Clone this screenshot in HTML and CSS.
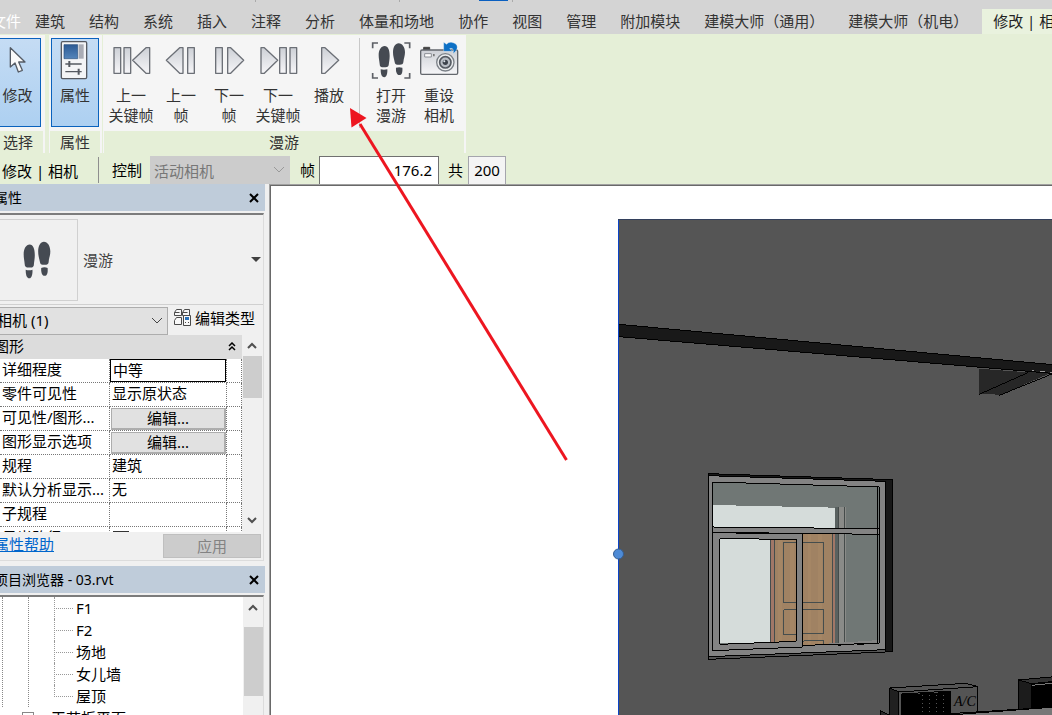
FILE: index.html
```html
<!DOCTYPE html>
<html lang="zh-CN">
<head>
<meta charset="utf-8">
<title>漫游</title>
<link rel="stylesheet" href="styles.css">
</head>
<body>
<svg class="defs" width="0" height="0" aria-hidden="true">
  <defs>
    <linearGradient id="metal" x1="0" y1="0" x2="0" y2="1"><stop offset="0" stop-color="#cdd0d6"/><stop offset="1" stop-color="#f6f6f8"/></linearGradient>
    <linearGradient id="screen" x1="0" y1="0" x2="0" y2="1"><stop offset="0" stop-color="#2c5a94"/><stop offset="1" stop-color="#5485bb"/></linearGradient>
    <g id="feet" fill="#454a52">
      <path d="M404 138c-11 0-18 12-18 27 0 11 2 17 3 27 0 8 4 10 12 10 8 0 13 0 15-6 1-10 3-18 3-29 0-17-5-29-15-29z"/>
      <path d="M392 208c6 2 14 2 20 0 1 11-2 24-9 24-9 0-11-12-11-24z"/>
      <path d="M446 130c-10 0-17 11-17 27 0 12 3 19 5 29 1 7 4 9 11 8 8 0 14 1 15-7 1-12 5-19 5-30 0-15-8-27-19-27z"/>
      <path d="M438 203c6-2 13-2 19 0 1 10 0 22-9 22-8 0-11-11-10-22z"/>
    </g>
  </defs>
</svg>

<nav class="tabs">
  <a class="tab file" href="#">文件</a>
  <a class="tab" href="#">建筑</a>
  <a class="tab" href="#">结构</a>
  <a class="tab" href="#">系统</a>
  <a class="tab" href="#">插入</a>
  <a class="tab" href="#">注释</a>
  <a class="tab" href="#">分析</a>
  <a class="tab" href="#">体量和场地</a>
  <a class="tab" href="#">协作</a>
  <a class="tab" href="#">视图</a>
  <a class="tab" href="#">管理</a>
  <a class="tab" href="#">附加模块</a>
  <a class="tab" href="#">建模大师（通用）</a>
  <a class="tab" href="#">建模大师（机电）</a>
  <a class="tab active" href="#">修改 | 相机</a>
  <svg class="marks" width="520" height="3" aria-hidden="true"><path d="M255.500 0v2M399.500 0v2M512.500 0v2" stroke="#aaa"/><path d="M479 0h29v1h-29z" fill="#0a5fc0"/></svg>
</nav>

<section class="ribbon">
  <div class="panel select-panel">
    <div class="tools">
      <button class="tool selected modify"><svg viewBox="-9 120 126 120"><path d="M31 143v58l14-12 10 27 12-5-11-25h19z" fill="#fafafa" stroke="#555c66" stroke-width="4" stroke-linejoin="round"/></svg><span>修改</span></button>
    </div>
    <div class="caption">选择</div>
  </div>
  <div class="panel props-panel">
    <div class="tools">
      <button class="tool selected"><svg viewBox="160 120 126 120">
        <rect x="182" y="125" width="76" height="111" rx="4" fill="#f3f4f6" stroke="#565a62" stroke-width="4"/>
        <path d="M190 134h41v42h-41z" fill="url(#screen)" stroke="#28507f" stroke-width="2"/><path d="M234 133h15v43h-15z" fill="#a9acb5"/>
        <path d="M194 192h49M194 215h49" stroke="#565a62" stroke-width="4"/><path d="M206 183v18M234 206v18" stroke="#565a62" stroke-width="6"/></svg><span>属性</span></button>
    </div>
    <div class="caption">属性</div>
  </div>
  <div class="panel walk-panel">
    <div class="tools">
      <button class="tool w50"><svg class="metal" viewBox="330 120 126 120"><path d="M342 143h20v77h-20zM372 143h20v77h-20zM398 181l40-38h11v77h-11z"/></svg><span>上一<br>关键帧</span></button>
      <button class="tool w50"><svg class="metal" viewBox="480 120 126 120"><path d="M499 181l40-38h10v77h-10zM563 143h20v77h-20z"/></svg><span>上一<br>帧</span></button>
      <button class="tool w46"><svg class="metal" viewBox="624 120 126 120"><path d="M647 143h20v77h-20zM683 143h9l39 38-39 39h-9z"/></svg><span>下一<br>帧</span></button>
      <button class="tool w52"><svg class="metal" viewBox="24 120 126 120"><path d="M36 143h10l40 38-40 39h-10zM92 143h20v77h-20zM123 143h20v77h-20z"/></svg><span>下一<br>关键帧</span></button>
      <button class="tool w50"><svg class="metal" viewBox="174 120 126 120"><path d="M215 143h10l41 38-41 39h-10z"/></svg><span>播放</span></button>
      <span class="divider"></span>
      <button class="tool w48"><svg viewBox="360 120 126 120"><use href="#feet"/><path d="M368 145v-16h16M463 129h16v16M368 219v15h16M463 234h16v-15" fill="none" stroke="#5d6066" stroke-width="5"/></svg><span>打开<br>漫游</span></button>
      <button class="tool w48"><svg viewBox="504 120 126 120">
        <path d="M521 150v-8h18v8" fill="#444" stroke="#444" stroke-width="3"/>
        <rect x="512" y="150" width="111" height="73" rx="4" fill="url(#metal)" stroke="#63676d" stroke-width="4"/>
        <path d="M524 161h20v10h-20z" fill="#fff" stroke="#8a8e95" stroke-width="3"/><path d="M549 162h5v7h-5z" fill="#777"/>
        <circle cx="586" cy="187" r="26" fill="#eceef0" stroke="#7b8087" stroke-width="4"/><circle cx="586" cy="187" r="17" fill="#b9bec5" stroke="#555a62" stroke-width="5"/><circle cx="586" cy="187" r="8" fill="#3d434c"/><circle cx="583" cy="184" r="3" fill="#dfe5ec"/>
        <path d="M581 127v27h27l-9-8c9-3 14 3 10 15 16-10 20-31-5-34-6-1-11 2-14 6z" fill="#0d70c5" stroke="#fff" stroke-width="1"/></svg><span>重设<br>相机</span></button>
    </div>
    <div class="caption">漫游</div>
  </div>
</section>

<form class="options">
  <span class="context">修改 | 相机</span>
  <label for="control">控制</label>
  <span class="combo disabled"><select id="control" disabled><option>活动相机</option></select><svg width="10" height="6"><path d="M0 0l5 5 5-5" fill="none" stroke="#999"/></svg></span>
  <label for="frame">帧</label>
  <input id="frame" class="frame" value="176.2">
  <label for="total">共</label>
  <input id="total" class="total" value="200" readonly>
</form>

<main class="work">
  <aside class="dock">
    <header class="dock-title"><h2>属性</h2><button class="close" aria-label="关闭"><svg width="10" height="10"><path d="M1 1l8 8M9 1L1 9" stroke="#000" stroke-width="2"/></svg></button></header>
    <section class="properties">
      <button class="type">
        <span class="thumb"><svg width="28" height="38" viewBox="384 128 83 106" preserveAspectRatio="none"><use href="#feet"/></svg></span>
        <span class="type-name">漫游</span>
        <svg width="10" height="5"><path d="M0 0h10l-5 5z" fill="#404040"/></svg>
      </button>
      <div class="filter">
        <span class="combo"><select aria-label="类别"><option>相机 (1)</option></select><svg width="10" height="6"><path d="M0 0l5 5 5-5" fill="none" stroke="#444"/></svg></span>
        <button class="edit-type"><svg width="17" height="17" fill="#f8f8f8" stroke="#4a4a4a"><path d="M.500 3.500l2-3h5v6h-7zM8.500 3.500l2-3h5v6h-7zM.500 11.500l2-3h5v7h-7zM.500 3.500h5M8.500 3.500h5"/><path d="M9.500 6.500h7v10h-7z"/><path d="M11 8h4v3h-4z" fill="#2b71b8" stroke="none"/><path d="M11 13.500h1M14 13.500h1"/></svg>编辑类型</button>
      </div>
      <div class="grid">
        <div class="grid-body">
          <button class="group">图形<svg width="8" height="9"><path d="M1 4l3-3 3 3M1 8l3-3 3 3" fill="none" stroke="#000" stroke-width="1.500"/></svg></button>
          <table>
            <colgroup><col class="c-name"><col class="c-value"><col class="c-link"></colgroup>
            <tbody>
            <tr><th scope="row"><label for="detail">详细程度</label></th><td><input id="detail" value="中等"></td><td></td></tr>
            <tr><th scope="row">零件可见性</th><td>显示原状态</td><td></td></tr>
            <tr><th scope="row">可见性/图形...</th><td><button class="edit">编辑...</button></td><td></td></tr>
            <tr><th scope="row">图形显示选项</th><td><button class="edit">编辑...</button></td><td></td></tr>
            <tr><th scope="row">规程</th><td>建筑</td><td></td></tr>
            <tr><th scope="row">默认分析显示...</th><td>无</td><td></td></tr>
            <tr><th scope="row">子规程</th><td></td><td></td></tr>
            <tr><th scope="row"><label for="sun">日光路径</label></th><td><input id="sun" type="checkbox"></td><td></td></tr>
            </tbody>
          </table>
        </div>
        <div class="scroll"><svg width="10" height="7"><path d="M1 6l4-4 4 4" fill="none" stroke="#505050" stroke-width="2"/></svg><span class="bar short"></span><svg class="down" width="10" height="7"><path d="M1 1l4 4 4-4" fill="none" stroke="#505050" stroke-width="2"/></svg></div>
      </div>
      <footer class="apply"><a href="#">属性帮助</a><button disabled>应用</button></footer>
    </section>
    <header class="dock-title"><h2>项目浏览器 - 03.rvt</h2><button class="close" aria-label="关闭"><svg width="10" height="10"><path d="M1 1l8 8M9 1L1 9" stroke="#000" stroke-width="2"/></svg></button></header>
    <section class="browser">
      <div class="tree">
        <ul>
          <li>F1</li>
          <li>F2</li>
          <li>场地</li>
          <li>女儿墙</li>
          <li>屋顶</li>
        </ul>
        <div class="branch"><span class="expander"></span>天花板平面</div>
      </div>
      <div class="scroll"><svg width="10" height="7"><path d="M1 6l4-4 4 4" fill="none" stroke="#505050" stroke-width="2"/></svg><span class="bar"></span></div>
    </section>
  </aside>

  <section class="canvas">
    <div class="view">
      <svg width="434" height="496" viewBox="618 219 434 496" shape-rendering="crispEdges">
        <!-- beam and bracket -->
        <g transform="translate(600 300) scale(.33333)" stroke="#000" stroke-width="3">
          <path d="M1137 206l145 11h74l-158 69-14-3h-47z" fill="#272727" stroke="none"/>
          <path d="M57 73L1380 196v26L57 110z" fill="#191919"/>
          <path d="M1137 283l147-65M1198 286l158-64"/>
          <path d="M1296 212h6M1320 215h15M1350 218h6" stroke="#999"/>
        </g>
        <!-- window -->
        <g transform="translate(690 460) scale(.33333)" stroke="#000" stroke-width="3">
          <path d="M55 41l553 18v515L55 598z" fill="#181818"/>
          <path d="M55 590l532-22v8L55 598z" fill="#555"/>
          <path d="M55 47l532 17v505L55 590z" fill="#838383"/>
          <path d="M68 66l500 15v469L68 572z" fill="#707775"/>
          <path d="M68 135l368 8v62H68z" fill="#d5dcda" stroke="none"/>
          <path d="M436 142h12v410h-12z" fill="#596160" stroke="none"/>
          <path d="M448 141h19v411h-19z" fill="#8a8b88" stroke="none"/>
          <path d="M447 141v411M464 141v411" stroke="#454b4a"/>
          <path d="M89 238h152v312H89z" fill="#d5dcda" stroke="none"/>
          <path d="M241 222h195v333H241z" fill="#a08263" stroke="none"/>
          <path d="M265 222h10v330h-10zM300 222h12v330h-12zM355 222h8v330h-8zM385 222h12v330h-12z" fill="#a58665" stroke="none"/>
          <path d="M243 222h10v333h-10zM428 222h8v333h-8z" fill="#a17767" stroke="none"/>
          <g fill="none" stroke="#454d4d"><path d="M241 238v312M253 238v312M427 222v333M280 247h121v180H280zM280 451l10-3h111v72l-121 3zM338 545l8-4h55v14"/></g>
          <path d="M338 556l230-16v10l-230 12z" fill="#838383" stroke="none"/>
          <path d="M68 201l500 5v17L68 217z" fill="#838383"/>
          <path d="M68 218l270 4v339L68 572zM89 236l230 2v306L89 553z" fill="#838383" fill-rule="evenodd"/>
          <path d="M338 556l230-6M564 81v469M568 81v469"/>
        </g>
        <!-- air conditioners -->
        <g transform="translate(860 660) scale(.33333)" stroke="#000" stroke-width="3">
          <path d="M89 84l228-14 36 9v90H89z" fill="#545454"/>
          <path d="M89 84l28 12v75H89z" fill="#202020"/>
          <path d="M117 96l236-16M125 102l148-9v72" fill="none"/>
          <path d="M124 105l148-8v70H124z" fill="#000"/>
          <path d="M187 105v60M208 105v60M229 105v60M250 105v60" stroke="#555" stroke-dasharray="3 9"/>
          <path d="M475 60l120-11v130H475z" fill="#343434"/><path d="M475 60l40 11v100h-40z" fill="#1c1c1c"/><path d="M515 71l80-8v120h-80z" fill="#000"/>
          <path d="M515 76l80-8" stroke="#777"/>
          <path d="M61 152l38 20H61z" fill="#282828"/>
          <path d="M270 165L600 140v40H270z" fill="#777"/><path d="M270 161L600 140"/>
        </g>
        <text class="ac-label" x="954" y="706">A/C</text>
        <path d="M618.500 219v496" stroke="#0a43c8"/>
        <path d="M618 219.500h434" stroke="#33405c"/>
        <circle cx="618.500" cy="554" r="5" fill="#4e8bd6" stroke="#355d91" shape-rendering="auto"/>
      </svg>
    </div>
  </section>
</main>

<svg class="pointer" width="220" height="356" viewBox="349 107 220 356" aria-hidden="true"><path d="M360 124l206.500 336" stroke="#ed1620" stroke-width="3"/><path d="M350 108l16.500 10-15 9.500z" fill="#ed1620"/></svg>
</body>
</html>
```

FILE: styles.css
```css
* { box-sizing: border-box; }

body {
  margin: 0;
  height: 100vh;
  overflow: hidden;
  display: flex;
  flex-direction: column;
  position: relative;
  background: #e5efd7;
  color: #000;
  font: 15px/20px "Noto Sans", "Noto Sans CJK SC", sans-serif;
}

button, input, select {
  font: inherit;
  color: inherit;
  margin: 0;
  padding: 0;
  border: 0;
  border-radius: 0;
  background: none;
}

svg { display: block; flex: none; }
.defs { position: absolute; }

/* Tabs */
.tabs {
  position: relative;
  flex: none;
  display: flex;
  align-items: flex-end;
  gap: 24px;
  height: 34px;
  padding-left: 35px;
  background: #d4d4d4;
  white-space: nowrap;
}
.tab {
  flex: none;
  height: 25px;
  line-height: 25px;
  color: #333;
  text-decoration: none;
}
.tab.file { margin-left: -44px; margin-right: -10px; color: #fff; }
.tab.active { margin-left: -10px; padding: 0 11px; background: #e9f2de; color: #222; }
.marks { position: absolute; top: 0; left: 0; }

/* Ribbon */
.ribbon { flex: none; display: flex; padding-top: 1px; height: 122px; color: #333; }
.panel { flex: none; height: 118px; display: flex; flex-direction: column; border-right: 2px solid #f5f5f5; }
.props-panel { margin-left: 4px; border-left: 1px solid #f5f5f5; }
.walk-panel { margin-left: 1px; border-left: 1px solid #f5f5f5; }
.tools { display: flex; height: 96px; padding: 3px 0; background: #f5f5f5; }
.select-panel .tools { padding-right: 2px; }
.props-panel .tools { padding: 3px 1px; }
.walk-panel .tools { padding-left: 2px; padding-right: 1px; }
.caption { height: 22px; line-height: 23px; text-align: center; }
.select-panel .caption { padding-right: 7px; }
.tool {
  flex: none;
  height: 89px;
  padding-top: 2px;
  display: flex;
  flex-direction: column;
  align-items: center;
  justify-content: flex-start;
  gap: 5px;
  line-height: 20px;
  white-space: nowrap;
}
.tool svg { width: 42px; height: 40px; }
.tool.selected { width: 48px; padding-top: 1px; border: 1px solid #0a62bd; background: linear-gradient(#c5dcf4, #add0f1); }
.tool.modify { margin-left: -6px; width: 47px; }
.w46 { width: 46px; }
.w48 { width: 48px; }
.w50 { width: 50px; }
.w52 { width: 52px; }
.metal { fill: url(#metal); stroke: #6c7077; stroke-width: 4; stroke-linejoin: round; }
.divider { width: 1px; margin: 0 7px 0 5px; background: #c8c8c8; }

/* Options bar */
.options { flex: none; display: flex; align-items: center; height: 28px; line-height: 28px; }
.context { width: 99px; height: 26px; line-height: 28px; padding-left: 2px; border-right: 1px solid #8e8e8e; margin-right: 13px; }
.options .combo { width: 140px; height: 28px; margin: 0 10px 0 8px; }
.combo { display: flex; align-items: center; position: relative; padding-right: 5px; background: #e1e1e1; border: 1px solid #adadad; }
.combo select { flex: 1; min-width: 0; height: 26px; padding-bottom: 2px; appearance: none; opacity: 1; }
.combo.disabled { background: #ccc; border-color: #ccc; color: #777; }
.combo.disabled select { padding-left: 3px; }
.frame { width: 120px; height: 28px; margin: 0 9px 0 4px; padding: 0 6px 2px 0; border: 1px solid #707070; border-bottom: 0; background: #fff; text-align: right; }
.total { width: 38px; height: 28px; margin-left: 5px; padding-bottom: 2px; border: 1px solid #a5a5ad; border-bottom: 0; background: #f4f4f4; text-align: center; }

/* Dock */
.work { flex: 1; min-height: 0; display: flex; }
.dock { flex: none; width: 269px; display: flex; flex-direction: column; background: #f0f0f0; }
.dock-title { flex: none; display: flex; justify-content: space-between; align-items: center; width: 265px; height: 27px; padding-right: 6px; background: #bfccda; }
.dock-title h2 { margin: 0 0 0 -6px; font-size: 14px; font-weight: 400; line-height: 27px; }
.properties { flex: none; width: 264px; margin: 2px 0 5px; border: solid #dcdcdc; border-width: 0 1px 1px 0; border-top: 2px solid #7c7c7c; }
.type { display: flex; align-items: center; width: 263px; height: 90px; padding-right: 2px; border-bottom: 1px solid #d0d0d0; text-align: left; color: #444; }
.thumb { display: flex; align-items: center; width: 78px; height: 82px; padding-left: 23px; margin-right: 5px; border: 1px solid #d0d0d0; border-left: 0; }
.type-name { flex: 1; }
.filter { display: flex; align-items: center; height: 30px; padding-top: 1px; }
.filter .combo { width: 168px; height: 28px; border-left: 0; }
.filter select { margin-left: -3px; }
.edit-type { display: flex; align-items: center; gap: 4px; margin: 0 0 6px 6px; }
.grid { display: flex; height: 197px; overflow: hidden; }
.grid-body { width: 242px; background: #fff; }
.group { display: flex; justify-content: space-between; align-items: center; width: 242px; height: 24px; padding: 0 6px 2px 0; background: #dcdcdc; text-indent: -6px; }
table { width: 242px; table-layout: fixed; border-collapse: separate; border-spacing: 0; }
.c-name { width: 110px; }
.c-value { width: 117px; }
.c-link { width: 15px; }
th, td { height: 24px; padding: 0 0 3px 2px; border: dotted #777; border-width: 0 1px 1px 0; font-weight: 400; line-height: 20px; text-align: left; white-space: nowrap; }
td:has(input), td:has(button) { padding: 0; }
#detail { display: block; width: 116px; height: 23px; padding: 0 0 2px 2px; border: 1px solid #000; background: #fff; }
#sun { appearance: none; display: block; width: 16px; height: 16px; margin-left: 3px; border: 1px solid #333; }
.edit { display: block; width: 115px; height: 22px; margin-left: 1px; border: 1px solid #adadad; border-width: 1px 2px 2px 1px; background: #e1e1e1; line-height: 19px; }
.scroll { width: 20px; display: flex; flex-direction: column; align-items: center; padding-top: 7px; background: #f0f0f0; }
.bar { width: 19px; height: 69px; margin-top: 16px; background: #cdcdcd; }
.bar.short { height: 42px; margin-top: 7px; }
.scroll .down { margin: auto 0 8px; }
.apply { display: flex; justify-content: space-between; height: 28px; padding: 2px 2px 0 0; }
.apply a { margin-left: -6px; color: #0066cc; }
.apply button { width: 98px; height: 24px; border: 1px solid #bfbfbf; background: #ccc; color: #838383; }

/* Project browser */
.browser { flex: 1; min-height: 0; width: 264px; margin-top: 2px; display: flex; border-top: 2px solid #7c7c7c; border-right: 1px solid #dcdcdc; background: #fff; overflow: hidden; }
.tree { flex: 1; padding-left: 2px; }
.tree ul { list-style: none; margin: 0; padding: 0 0 0 25px; border-left: 1px dotted #888; }
.tree ul::before { content: ""; float: left; height: 110px; border-left: 1px dotted #888; }
.tree li { display: flex; align-items: center; height: 22px; margin-left: 26px; position: relative; }
.tree li::before { content: ""; width: 18px; height: 11px; margin: 0 3px 11px 0; border: dotted #999; border-width: 0 0 1px 1px; }
.tree li:not(:last-child)::after { content: ""; position: absolute; left: 0; top: 0; height: 22px; border-left: 1px dotted #999; }
.branch { display: flex; align-items: center; gap: 17px; height: 22px; padding-left: 20px; }
.expander { width: 12px; height: 12px; border: 1px solid #888; }
.browser .scroll { flex: none; }

/* Drawing area */
.canvas { flex: 1; min-width: 0; display: flex; padding: 34px 0 0 348px; border: solid #a0a0a0; border-width: 1px 0 0 1px; background: #fff; box-shadow: inset 1px 1px #696969; overflow: hidden; }
.view { flex: 1; min-width: 0; background: #555; }
.view svg { overflow: visible; }
.ac-label { font: italic 14px "Liberation Serif", serif; }
.pointer { position: absolute; left: 349px; top: 107px; }
```
